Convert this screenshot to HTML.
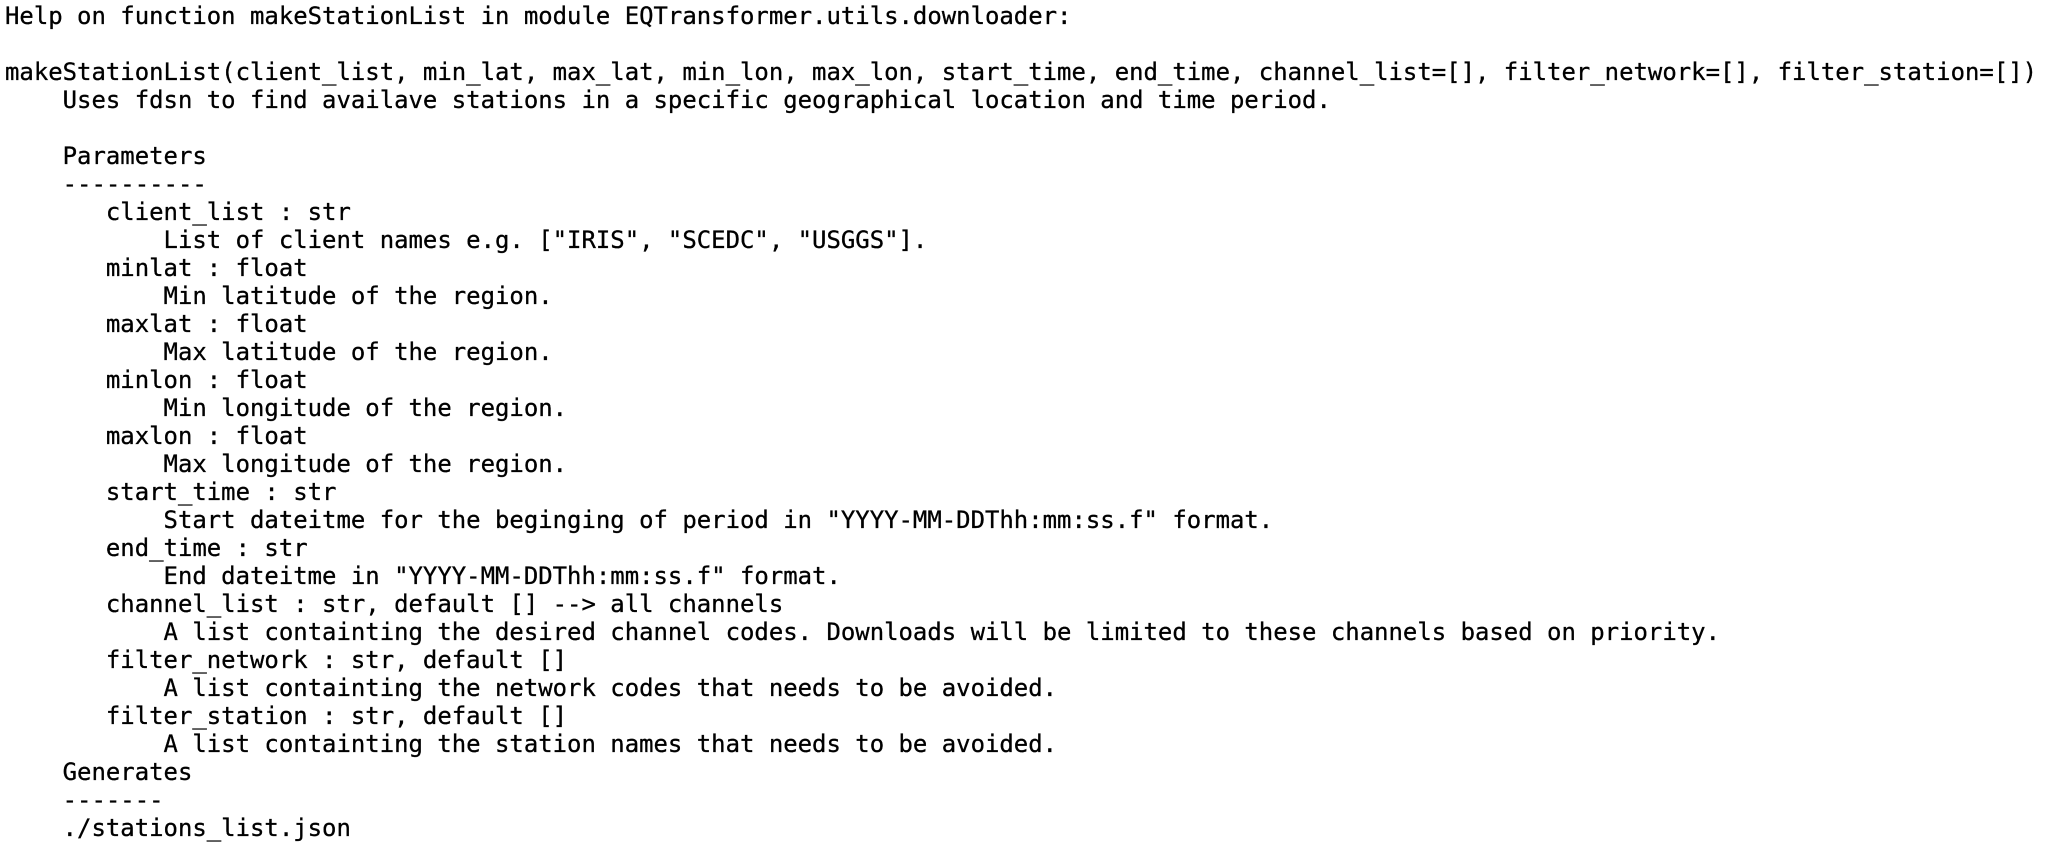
<!DOCTYPE html>
<html><head><meta charset="utf-8"><style>
html,body{margin:0;padding:0;background:#fff;width:2051px;height:861px;overflow:hidden}
pre{margin:0;padding:2px 0 0 5px;font-family:"DejaVu Sans Mono","Liberation Mono",monospace;font-size:23.95px;line-height:28.02px;color:#000;white-space:pre;-webkit-text-stroke:0.3px #000}
</style></head><body><pre>Help on function makeStationList in module EQTransformer.utils.downloader:

makeStationList(client_list, min_lat, max_lat, min_lon, max_lon, start_time, end_time, channel_list=[], filter_network=[], filter_station=[])
    Uses fdsn to find availave stations in a specific geographical location and time period.

    Parameters
    ----------
       client_list : str
           List of client names e.g. ["IRIS", "SCEDC", "USGGS"].
       minlat : float
           Min latitude of the region.
       maxlat : float
           Max latitude of the region.
       minlon : float
           Min longitude of the region.
       maxlon : float
           Max longitude of the region.
       start_time : str
           Start dateitme for the beginging of period in "YYYY-MM-DDThh:mm:ss.f" format.
       end_time : str
           End dateitme in "YYYY-MM-DDThh:mm:ss.f" format.
       channel_list : str, default [] --&gt; all channels
           A list containting the desired channel codes. Downloads will be limited to these channels based on priority.
       filter_network : str, default []
           A list containting the network codes that needs to be avoided.
       filter_station : str, default []
           A list containting the station names that needs to be avoided.
    Generates
    -------
    ./stations_list.json</pre></body></html>
